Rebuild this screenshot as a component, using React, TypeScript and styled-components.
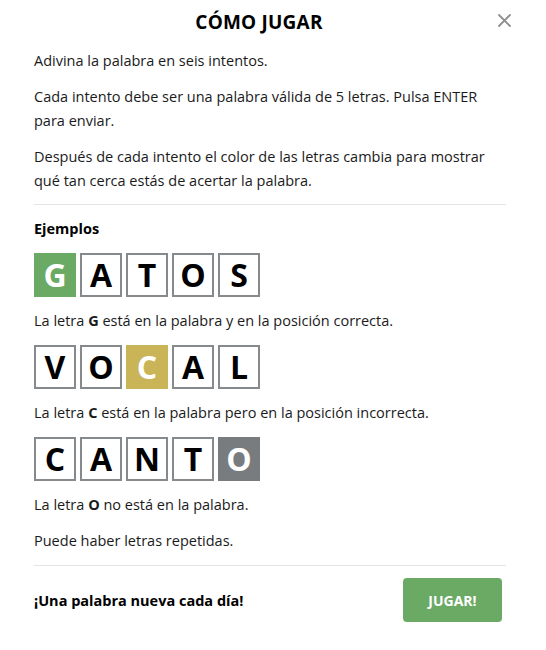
import React from "react";
import styled, { createGlobalStyle } from "styled-components";

const GlobalStyle = createGlobalStyle`
  html, body {
    margin: 0;
    padding: 0;
    background: #ffffff;
  }
  body {
    font-family: "Open Sans", "Noto Sans", sans-serif;
    color: #1a1a1b;
  }
  * { box-sizing: border-box; }
`;

const Modal = styled.div`
  width: 546px;
  padding: 0 40px 0 34px;
  display: flex;
  flex-direction: column;
`;

const Header = styled.header`
  position: relative;
  height: 49px;
  display: flex;
  align-items: center;
  justify-content: center;
  padding: 0 22px 5px 0;
`;

const Title = styled.h1`
  margin: 0;
  font-size: 19px;
  font-weight: 700;
  letter-spacing: 0.2px;
  color: #000;
`;

const CloseButton = styled.button`
  position: absolute;
  right: -6px;
  top: 13px;
  width: 15px;
  height: 15px;
  padding: 0;
  border: none;
  background: none;
  cursor: pointer;
  display: flex;
  align-items: center;
  justify-content: center;
`;

const Text = styled.p<{ $gap?: number }>`
  margin: 0 0 ${(p) => p.$gap ?? 12}px;
  font-size: 14.5px;
  line-height: 24px;
  color: #1a1a1b;
`;

const Divider = styled.hr<{ $top: number }>`
  margin: ${(p) => p.$top}px 0 0;
  border: none;
  border-top: 1px solid #e3e3e3;
  width: 472px;
`;

const SectionTitle = styled.h2`
  margin: 12px 0 12px;
  font-size: 14.5px;
  line-height: 24px;
  font-weight: 700;
  color: #000;
`;

const TileRow = styled.div`
  display: flex;
  gap: 4px;
  margin-bottom: 12px;
`;

type TileState = "correct" | "present" | "absent" | "empty";

const tileBg: Record<TileState, string> = {
  correct: "#6aaa64",
  present: "#c9b458",
  absent: "#787c7e",
  empty: "#ffffff",
};

const Tile = styled.div<{ $state: TileState }>`
  width: 42px;
  height: 44px;
  display: flex;
  align-items: center;
  justify-content: center;
  font-size: 32px;
  font-weight: 700;
  line-height: 1;
  background: ${(p) => tileBg[p.$state]};
  color: ${(p) => (p.$state === "empty" ? "#000" : "#fff")};
  border: 2px solid ${(p) => (p.$state === "empty" ? "#878a8c" : tileBg[p.$state])};
`;

const Footer = styled.footer`
  display: flex;
  align-items: center;
  justify-content: space-between;
  padding: 12px 4px 0 0;
`;

const Tagline = styled.span`
  font-size: 14.5px;
  font-weight: 700;
  color: #000;
`;

const PlayButton = styled.button`
  width: 99px;
  height: 44px;
  border: none;
  border-radius: 4px;
  background: #6aaa64;
  color: #fff;
  font-family: inherit;
  font-size: 14px;
  font-weight: 700;
  cursor: pointer;
`;

const Word: React.FC<{ word: string; mark: number; state: TileState }> = ({
  word,
  mark,
  state,
}) => (
  <TileRow>
    {word.split("").map((ch, i) => (
      <Tile key={i} $state={i === mark ? state : "empty"}>
        {ch}
      </Tile>
    ))}
  </TileRow>
);

export default function App() {
  return (
    <>
      <GlobalStyle />
      <Modal>
        <Header>
          <Title>CÓMO JUGAR</Title>
          <CloseButton aria-label="Cerrar">
            <svg width="13" height="13" viewBox="0 0 13 13">
              <path
                d="M1 1 L12 12 M12 1 L1 12"
                stroke="#8f8f8f"
                strokeWidth="1.8"
                strokeLinecap="round"
              />
            </svg>
          </CloseButton>
        </Header>
        <Text>Adivina la palabra en seis intentos.</Text>
        <Text>
          Cada intento debe ser una palabra válida de 5 letras. Pulsa ENTER
          para enviar.
        </Text>
        <Text $gap={0}>
          Después de cada intento el color de las letras cambia para mostrar
          qué tan cerca estás de acertar la palabra.
        </Text>
        <Divider $top={11} />
        <SectionTitle>Ejemplos</SectionTitle>
        <Word word="GATOS" mark={0} state="correct" />
        <Text>
          La letra <b>G</b> está en la palabra y en la posición correcta.
        </Text>
        <Word word="VOCAL" mark={2} state="present" />
        <Text>
          La letra <b>C</b> está en la palabra pero en la posición incorrecta.
        </Text>
        <Word word="CANTO" mark={4} state="absent" />
        <Text>
          La letra <b>O</b> no está en la palabra.
        </Text>
        <Text $gap={0}>Puede haber letras repetidas.</Text>
        <Divider $top={12} />
        <Footer>
          <Tagline>¡Una palabra nueva cada día!</Tagline>
          <PlayButton>JUGAR!</PlayButton>
        </Footer>
      </Modal>
    </>
  );
}
